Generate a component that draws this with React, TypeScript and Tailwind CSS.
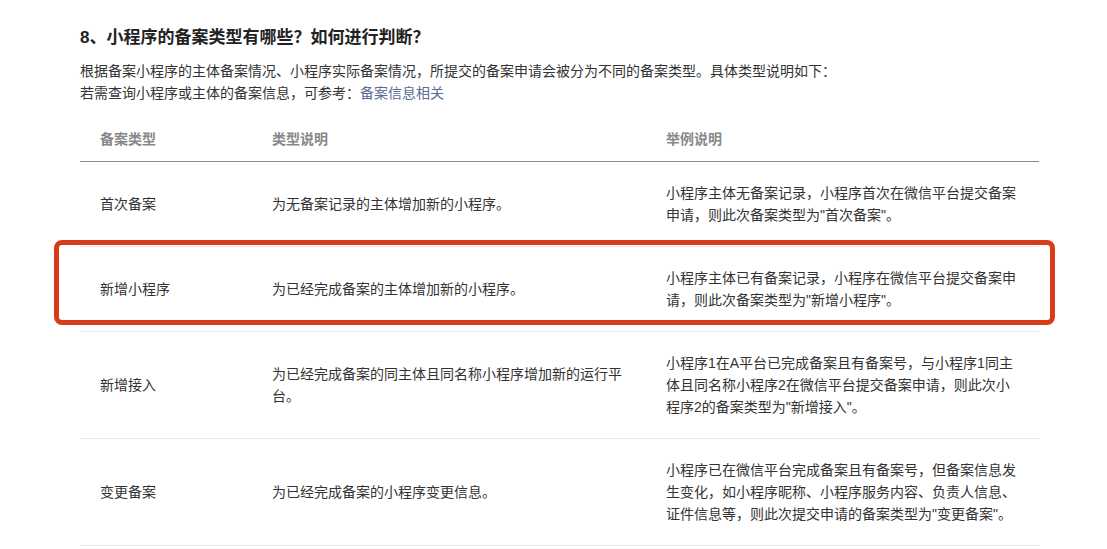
const rows = [
  {
    type: '首次备案',
    desc: '为无备案记录的主体增加新的小程序。',
    example: '小程序主体无备案记录，小程序首次在微信平台提交备案申请，则此次备案类型为"首次备案"。',
  },
  {
    type: '新增小程序',
    desc: '为已经完成备案的主体增加新的小程序。',
    example: '小程序主体已有备案记录，小程序在微信平台提交备案申请，则此次备案类型为"新增小程序"。',
    marked: true,
  },
  {
    type: '新增接入',
    desc: '为已经完成备案的同主体且同名称小程序增加新的运行平台。',
    example: '小程序1在A平台已完成备案且有备案号，与小程序1同主体且同名称小程序2在微信平台提交备案申请，则此次小程序2的备案类型为"新增接入"。',
  },
  {
    type: '变更备案',
    desc: '为已经完成备案的小程序变更信息。',
    example: '小程序已在微信平台完成备案且有备案号，但备案信息发生变化，如小程序昵称、小程序服务内容、负责人信息、证件信息等，则此次提交申请的备案类型为"变更备案"。',
  },
];

export default function App() {
  return (
    <div className="min-h-screen bg-white font-['Liberation_Sans','Noto_Sans_CJK_SC',sans-serif] text-[#333]">
      <div className="w-[959px] ml-[80px] pt-[25px]">
        <h2 className="text-[17px] leading-[26px] font-bold text-[#222]">8、小程序的备案类型有哪些？如何进行判断？</h2>
        <p className="mt-[9px] text-[14px] leading-[22px]">
          根据备案小程序的主体备案情况、小程序实际备案情况，所提交的备案申请会被分为不同的备案类型。具体类型说明如下：
          <br />
          若需查询小程序或主体的备案信息，可参考：<a className="text-[#576b95]">备案信息相关</a>
        </p>

        <div className="mt-[13px] text-[14px] leading-[22px]">
          <div className="grid grid-cols-[172px_394px_393px] border-b border-[#8c8c8c] text-[#888] font-bold">
            <div className="px-5 py-[11px]">备案类型</div>
            <div className="px-5 py-[11px]">类型说明</div>
            <div className="px-5 py-[11px]">举例说明</div>
          </div>
          {rows.map((r) => (
            <div key={r.type} className="relative grid grid-cols-[172px_394px_393px] border-b border-[#e8e8e8]">
              <div className="px-5 py-5 flex items-center">{r.type}</div>
              <div className="px-5 py-5 flex items-center">{r.desc}</div>
              <div className="px-5 py-5 flex items-center">{r.example}</div>
              {r.marked && (
                <div className="absolute -top-[7px] -left-[26px] -right-[16px] bottom-[6px] rounded-lg border-[5px] border-[#d93a17]" />
              )}
            </div>
          ))}
        </div>
      </div>
    </div>
  );
}
